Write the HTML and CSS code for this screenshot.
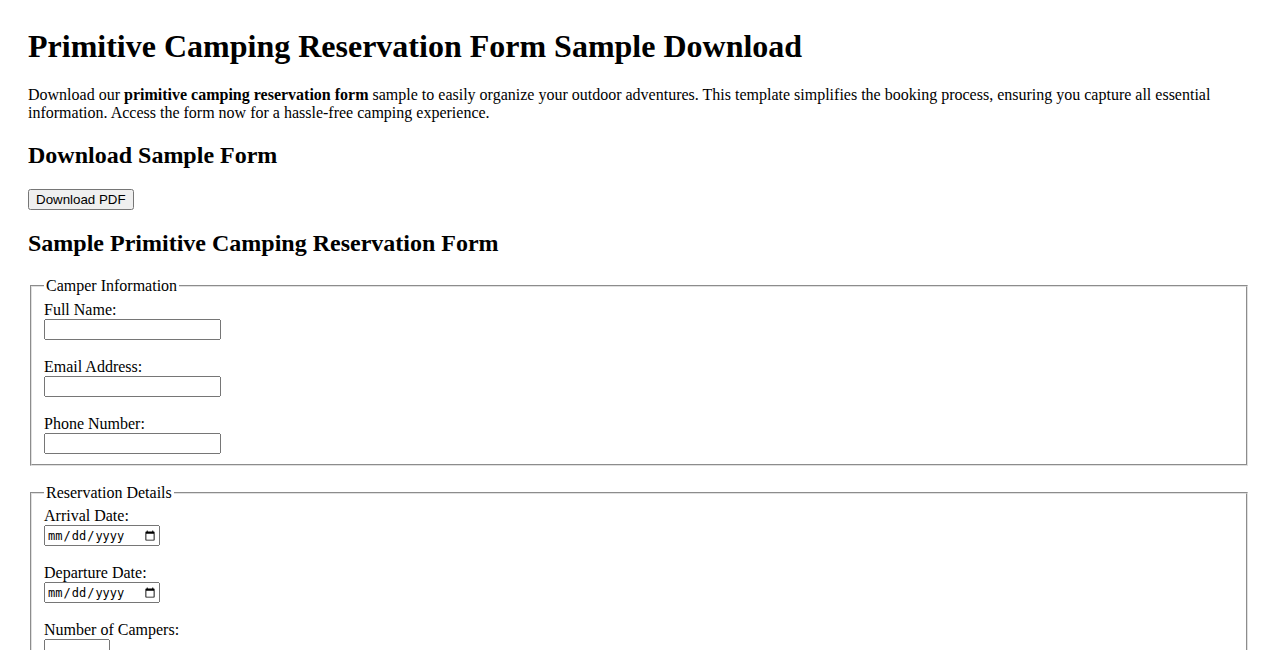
FILE: index.html
```html
<!DOCTYPE html>
<html lang="en">
<head>
    <meta charset="UTF-8">
    <meta name="viewport" content="width=device-width, initial-scale=1.0">
    <title>Primitive Camping Reservation Form Sample Download</title>
    <link rel="stylesheet" href="styles.css">
</head>
<body>

    <h1>Primitive Camping Reservation Form Sample Download</h1>
    <p>Download our <strong>primitive camping reservation form</strong> sample to easily organize your outdoor adventures. This template simplifies the booking process, ensuring you capture all essential information. Access the form now for a hassle-free camping experience.</p>

    <h2>Download Sample Form</h2>
    <button type="button" class="download-btn">Download PDF</button>

    <h2>Sample Primitive Camping Reservation Form</h2>
    <form action="#" method="POST">
        <fieldset class="form-group">
            <legend>Camper Information</legend>
            <label for="full_name">Full Name:</label><br>
            <input type="text" id="full_name" name="full_name" class="text-input"><br><br>

            <label for="email">Email Address:</label><br>
            <input type="email" id="email" name="email" class="text-input"><br><br>

            <label for="phone">Phone Number:</label><br>
            <input type="tel" id="phone" name="phone" class="text-input">
        </fieldset>

        <fieldset class="form-group">
            <legend>Reservation Details</legend>
            <label for="arrival">Arrival Date:</label><br>
            <input type="date" id="arrival" name="arrival" class="date-input"><br><br>

            <label for="departure">Departure Date:</label><br>
            <input type="date" id="departure" name="departure" class="date-input"><br><br>

            <label for="campers">Number of Campers:</label><br>
            <input type="number" id="campers" name="campers" class="small-input"><br><br>

            <label for="site">Campsite Preference:</label><br>
            <input type="text" id="site" name="site" class="text-input">
        </fieldset>
    </form>

</body>
</html>
```

FILE: styles.css
```css
body {
    font-family: "Liberation Serif", "Times New Roman", serif;
    font-size: 16px;
    color: #000;
    background-color: #fff;
    margin: 28px;
}
h1 {
    font-size: 32px;
    margin: 0 0 21px;
}
h2 {
    font-size: 24px;
    margin: 20px 0;
}
p {
    margin: 16px 0;
}
input, button {
    font-family: "Liberation Sans", Arial, sans-serif;
    font-size: 13.33px;
}
.download-btn {
    display: block;
    padding: 1px 6px;
}
.form-group {
    margin: 0 2px 18px;
    border: 2px groove #e0e0e0;
}
.text-input {
    width: 177px;
    height: 21px;
    box-sizing: border-box;
}
.date-input {
    width: 116px;
    height: 21px;
    box-sizing: border-box;
    font-family: "DejaVu Sans Mono", monospace;
    font-size: 12px;
}
.small-input {
    width: 66px;
    height: 21px;
    box-sizing: border-box;
}
```
